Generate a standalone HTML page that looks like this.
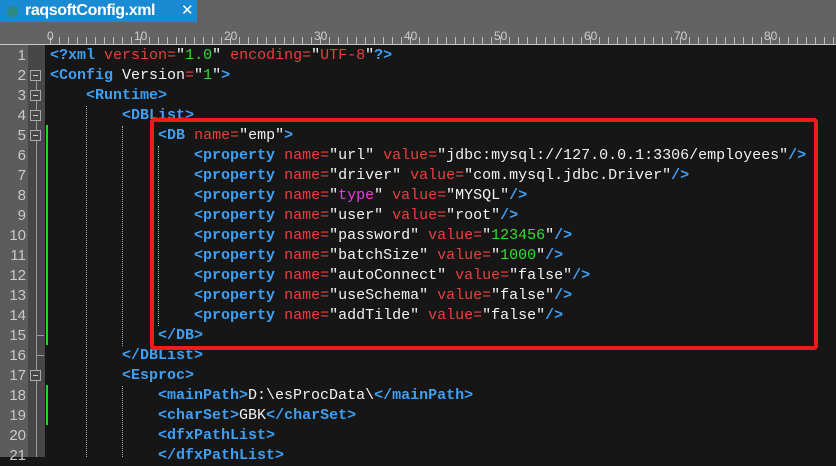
<!DOCTYPE html>
<html><head><meta charset="utf-8"><style>
body{margin:0;width:836px;height:457px;overflow:hidden;background:#161616;position:relative;font-family:"Liberation Mono",monospace}
.top{position:absolute;left:0;top:0;width:836px;height:45px;background:#636363}
.tab{position:absolute;left:0;top:0;width:197px;height:22px;background:#1a8ad2;color:#fff;font:bold 16px "Liberation Sans",sans-serif}
.tab .dot{position:absolute;left:7px;top:6px;width:11px;height:11px;border-radius:50%;background:#2c8a84}
.tab .nm{position:absolute;left:25px;top:2px;letter-spacing:-0.4px}
.tab .x{position:absolute;left:181px;top:1px;font-weight:normal;font-size:15px}
.ruler{position:absolute;left:45px;top:0;width:791px;height:45px}
.ticks{position:absolute;left:0;top:37px;height:7px;width:791px;background:repeating-linear-gradient(90deg,transparent 0,transparent 5px,#bbb 5px,#bbb 6px,transparent 6px,transparent 9px)}
.base{position:absolute;left:0;top:44px;width:836px;height:1px;background:#c8c8c8}
.rl{position:absolute;top:29px;color:#ccc;font:12px "Liberation Sans",sans-serif}
.gut{position:absolute;left:0;top:45px;width:28px;height:412px;background:#5c5c5c}
.fold{position:absolute;left:28px;top:45px;width:17px;height:412px;background:#474747}
.ln{position:absolute;left:0;width:26px;text-align:right;color:#c8c8c8;font:15px "Liberation Sans",sans-serif;line-height:20px}
.fb{position:absolute;left:30px;width:11px;height:11px;border:1px solid #aaa;box-sizing:border-box;background:#474747}
.fb:after{content:"";position:absolute;left:2px;top:4px;width:5px;height:1px;background:#ccc}
.vl{position:absolute;left:36px;width:1px;background:#999}
.code{position:absolute;left:50px;top:46px;font-size:15px;line-height:20px;white-space:pre;color:#f2f2f2}
.t{color:#3f9ff2;font-weight:bold}.a{color:#e8403c}.n{color:#2fe02f}.k{color:#e040e0}
.grn{position:absolute;left:46px;width:2px;background:#22d822}
.box{position:absolute;left:150px;top:118px;width:668px;height:232px;border:4px solid #ee1c1c;border-radius:4px;box-sizing:border-box}
.dt{position:absolute;width:0;border-left:1px dotted #aaa}
</style></head><body>
<div class="top"></div>
<div class="tab"><div class="dot"></div><div class="nm">raqsoftConfig.xml</div><div class="x">✕</div></div>
<div class="ruler"><div class="ticks"></div>
<div class="rl" style="left:2px">0</div><div class="rl" style="left:89px">10</div><div class="rl" style="left:179px">20</div><div class="rl" style="left:269px">30</div><div class="rl" style="left:359px">40</div><div class="rl" style="left:449px">50</div><div class="rl" style="left:539px">60</div><div class="rl" style="left:629px">70</div><div class="rl" style="left:719px">80</div></div>
<div class="base"></div>
<div class="gut"></div><div class="fold"></div>
<div style="position:absolute;left:0;top:46px">
<div class="ln" style="top:0">1</div><div class="ln" style="top:20px">2</div><div class="ln" style="top:40px">3</div><div class="ln" style="top:60px">4</div><div class="ln" style="top:80px">5</div><div class="ln" style="top:100px">6</div><div class="ln" style="top:120px">7</div><div class="ln" style="top:140px">8</div><div class="ln" style="top:160px">9</div><div class="ln" style="top:180px">10</div><div class="ln" style="top:200px">11</div><div class="ln" style="top:220px">12</div><div class="ln" style="top:240px">13</div><div class="ln" style="top:260px">14</div><div class="ln" style="top:280px">15</div><div class="ln" style="top:300px">16</div><div class="ln" style="top:320px">17</div><div class="ln" style="top:340px">18</div><div class="ln" style="top:360px">19</div><div class="ln" style="top:380px">20</div><div class="ln" style="top:400px">21</div>
</div>
<div class="vl" style="top:81px;height:376px"></div>
<div class="fb" style="top:70px"></div><div class="fb" style="top:90px"></div><div class="fb" style="top:110px"></div><div class="fb" style="top:130px"></div><div class="fb" style="top:370px"></div>
<div class="vl" style="left:36px;top:335px;width:8px;height:1px"></div><div class="vl" style="left:36px;top:355px;width:8px;height:1px"></div>
<div class="grn" style="top:125px;height:220px"></div><div class="grn" style="top:385px;height:40px"></div>
<div class="dt" style="left:86px;top:106px;height:351px"></div>
<div class="dt" style="left:122px;top:126px;height:220px"></div>
<div class="dt" style="left:122px;top:386px;height:71px"></div>
<div class="dt" style="left:158px;top:146px;height:180px"></div>
<div class="code"><span class="t">&lt;?xml</span> <span class="a">version=</span>"<span class="n">1.0</span>" <span class="a">encoding=</span>"<span class="a">UTF-8</span>"<span class="t">?&gt;</span>
<span class="t">&lt;Config</span> Version<span class="a">=</span>"<span class="n">1</span>"<span class="t">&gt;</span>
    <span class="t">&lt;Runtime&gt;</span>
        <span class="t">&lt;DBList&gt;</span>
            <span class="t">&lt;DB</span> <span class="a">name=</span>"emp"<span class="t">&gt;</span>
                <span class="t">&lt;property</span> <span class="a">name=</span>"url" <span class="a">value=</span>"jdbc:mysql://127.0.0.1:3306/employees"<span class="t">/&gt;</span>
                <span class="t">&lt;property</span> <span class="a">name=</span>"driver" <span class="a">value=</span>"com.mysql.jdbc.Driver"<span class="t">/&gt;</span>
                <span class="t">&lt;property</span> <span class="a">name=</span>"<span class="k">type</span>" <span class="a">value=</span>"MYSQL"<span class="t">/&gt;</span>
                <span class="t">&lt;property</span> <span class="a">name=</span>"user" <span class="a">value=</span>"root"<span class="t">/&gt;</span>
                <span class="t">&lt;property</span> <span class="a">name=</span>"password" <span class="a">value=</span>"<span class="n">123456</span>"<span class="t">/&gt;</span>
                <span class="t">&lt;property</span> <span class="a">name=</span>"batchSize" <span class="a">value=</span>"<span class="n">1000</span>"<span class="t">/&gt;</span>
                <span class="t">&lt;property</span> <span class="a">name=</span>"autoConnect" <span class="a">value=</span>"false"<span class="t">/&gt;</span>
                <span class="t">&lt;property</span> <span class="a">name=</span>"useSchema" <span class="a">value=</span>"false"<span class="t">/&gt;</span>
                <span class="t">&lt;property</span> <span class="a">name=</span>"addTilde" <span class="a">value=</span>"false"<span class="t">/&gt;</span>
            <span class="t">&lt;/DB&gt;</span>
        <span class="t">&lt;/DBList&gt;</span>
        <span class="t">&lt;Esproc&gt;</span>
            <span class="t">&lt;mainPath&gt;</span>D:\esProcData\<span class="t">&lt;/mainPath&gt;</span>
            <span class="t">&lt;charSet&gt;</span>GBK<span class="t">&lt;/charSet&gt;</span>
            <span class="t">&lt;dfxPathList&gt;</span>
            <span class="t">&lt;/dfxPathList&gt;</span></div>
<div class="box"></div>
</body></html>
